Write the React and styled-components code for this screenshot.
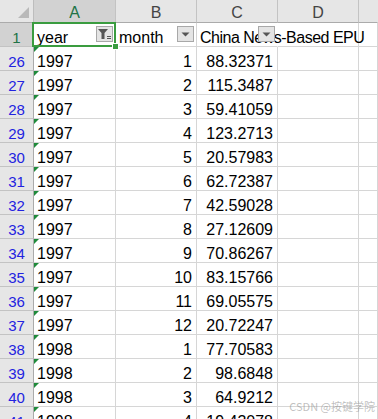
import React from "react";
import styled, { createGlobalStyle } from "styled-components";

const GlobalStyle = createGlobalStyle`
  html, body { margin: 0; padding: 0; background: #fff; overflow: hidden; }
  body { font-family: "Liberation Sans", Arial, sans-serif; }
`;

const GREEN = "#3a9c3f";
const GRID = "#d6d6d6";

const Page = styled.div`
  position: relative;
  width: 378px;
  height: 419px;
  overflow: hidden;
`;

const Sheet = styled.div`
  display: grid;
  grid-template-columns: 34px 82px 81px 81px 81px 1fr;
  grid-template-rows: 23px;
  grid-auto-rows: 24px;
`;

const Corner = styled.div`
  box-sizing: border-box;
  background: #e6e6e6;
  border-right: 1px solid #bdbdbd;
  border-bottom: 1px solid #ababab;
  display: flex;
  align-items: flex-end;
  justify-content: flex-end;
  padding: 0 4px 4px 0;
`;

const ColHeader = styled.div`
  box-sizing: border-box;
  background: ${(p) => (p.$selected ? "#d2d2d2" : "#e6e6e6")};
  color: ${(p) => (p.$selected ? "#217346" : "#444")};
  border-right: 1px solid ${(p) => (p.$last ? "transparent" : "#c3c3c3")};
  border-bottom: 1px solid #ababab;
  font-size: 16px;
  line-height: 17px;
  padding-top: 4px;
  text-align: center;
`;

const RowHeader = styled.div`
  box-sizing: border-box;
  background: ${(p) => (p.$selected ? "#d2d2d2" : "#e6e6e6")};
  color: ${(p) => (p.$selected ? "#217346" : "#2222e0")};
  border-right: 1px solid #ababab;
  border-bottom: 1px solid #c3c3c3;
  font-size: 15px;
  line-height: 17px;
  padding-top: 6px;
  text-align: center;
`;

const Cell = styled.div`
  position: relative;
  z-index: ${(p) => (p.$over ? 1 : "auto")};
  box-sizing: border-box;
  background: #fff;
  color: #000;
  border-right: 1px solid ${(p) => (p.$noRight ? "#fff" : GRID)};
  border-bottom: 1px solid ${GRID};
  font-size: 16px;
  line-height: 17px;
  letter-spacing: ${(p) => (p.$tight ? "-0.5px" : "normal")};
  padding: 6px 4px 0 3px;
  text-align: ${(p) => (p.$right ? "right" : "left")};
  white-space: nowrap;
  overflow: visible;
`;

const FilterButton = styled.div`
  position: absolute;
  right: 2px;
  top: 3px;
  width: 17px;
  height: 16px;
  box-sizing: border-box;
  border: 1px solid #a8a8a8;
  background: #e4e4e4;
  display: flex;
  align-items: center;
  justify-content: center;
  z-index: 1;
`;

const Selection = styled.div`
  position: absolute;
  left: -2px;
  top: -1px;
  right: -1px;
  bottom: -1px;
  border: 2px solid ${GREEN};
  pointer-events: none;
  z-index: 2;
`;

const Handle = styled.div`
  position: absolute;
  right: -5px;
  bottom: -5px;
  width: 5px;
  height: 5px;
  background: ${GREEN};
  border: 1px solid #fff;
`;

const TextMark = styled.div`
  position: absolute;
  left: 0;
  top: 0;
  width: 0;
  height: 0;
  border-top: 5px solid #1f8a3b;
  border-right: 5px solid transparent;
`;

const Watermark = styled.div`
  position: absolute;
  right: 3px;
  bottom: 6px;
  font-family: "Noto Sans CJK SC", "Liberation Sans", sans-serif;
  font-size: 11px;
  line-height: 13px;
  color: rgba(140, 140, 140, 0.55);
  z-index: 3;
`;

const CornerTriangle = () => (
  <svg width="11" height="11" viewBox="0 0 11 11">
    <path d="M11 0 L11 11 L0 11 Z" fill="#b9b9b9" />
  </svg>
);

const Arrow = () => (
  <svg width="9" height="5" viewBox="0 0 9 5">
    <path d="M0.5 0.5 L8.5 0.5 L4.5 4.5 Z" fill="#555" />
  </svg>
);

const Funnel = () => (
  <svg width="15" height="14" viewBox="0 0 15 14">
    <path d="M1 2 L11 2 L7.5 6 L7.5 12 L4.5 12 L4.5 6 Z" fill="#555" />
    <rect x="10" y="9" width="4" height="1" fill="#555" />
    <rect x="10" y="11" width="4" height="1" fill="#555" />
  </svg>
);

const data = [
  [26, "1997", 1, "88.32371"],
  [27, "1997", 2, "115.3487"],
  [28, "1997", 3, "59.41059"],
  [29, "1997", 4, "123.2713"],
  [30, "1997", 5, "20.57983"],
  [31, "1997", 6, "62.72387"],
  [32, "1997", 7, "42.59028"],
  [33, "1997", 8, "27.12609"],
  [34, "1997", 9, "70.86267"],
  [35, "1997", 10, "83.15766"],
  [36, "1997", 11, "69.05575"],
  [37, "1997", 12, "20.72247"],
  [38, "1998", 1, "77.70583"],
  [39, "1998", 2, "98.6848"],
  [40, "1998", 3, "64.9212"],
  [41, "1998", 4, "19.43078"],
];

export default function App() {
  return (
    <Page>
      <GlobalStyle />
      <Sheet>
        <Corner>
          <CornerTriangle />
        </Corner>
        <ColHeader $selected>A</ColHeader>
        <ColHeader>B</ColHeader>
        <ColHeader>C</ColHeader>
        <ColHeader>D</ColHeader>
        <ColHeader $last />

        <RowHeader $selected>1</RowHeader>
        <Cell $over>
          year
          <FilterButton>
            <Funnel />
          </FilterButton>
          <Selection>
            <Handle />
          </Selection>
        </Cell>
        <Cell>
          month
          <FilterButton>
            <Arrow />
          </FilterButton>
        </Cell>
        <Cell $noRight $over $tight>
          China News-Based EPU
          <FilterButton>
            <Arrow />
          </FilterButton>
        </Cell>
        <Cell />
        <Cell />

        {data.map(([row, year, month, value]) => (
          <React.Fragment key={row}>
            <RowHeader>{row}</RowHeader>
            <Cell>
              <TextMark />
              {year}
            </Cell>
            <Cell $right>{month}</Cell>
            <Cell $right>{value}</Cell>
            <Cell />
            <Cell />
          </React.Fragment>
        ))}
      </Sheet>
      <Watermark>CSDN @按键学院</Watermark>
    </Page>
  );
}
